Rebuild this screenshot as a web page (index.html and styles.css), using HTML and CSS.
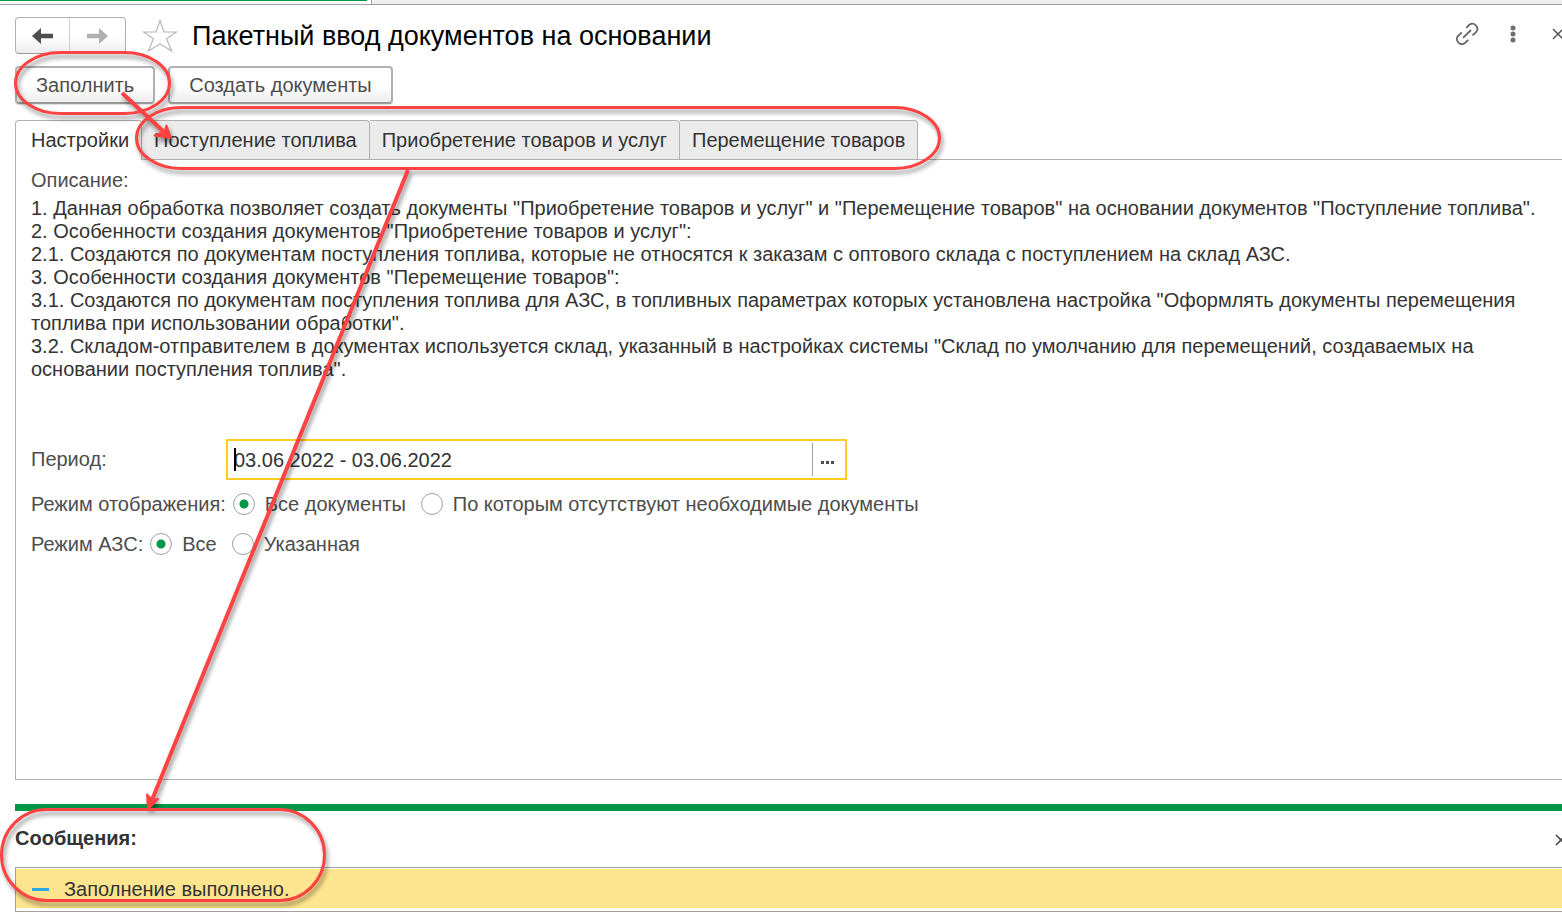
FILE: index.html
```html
<!DOCTYPE html>
<html lang="ru">
<head>
<meta charset="utf-8">
<title>Пакетный ввод документов на основании</title>
<link rel="stylesheet" href="styles.css">
</head>
<body>
<div class="window-tabs"><div class="window-tab-active"></div><div class="window-tab-rest"></div></div>
<div class="page">
  <header class="header">
    <div class="nav">
      <button class="nav-btn" type="button" aria-label="Назад"><svg width="22" height="16" viewBox="0 0 22 16"><path d="M0 8 9 0V5.800H21V10.200H9V16Z" fill="#4d4d4d"/></svg></button>
      <button class="nav-btn" type="button" aria-label="Вперед"><svg width="22" height="16" viewBox="0 0 22 16"><path d="M22 8 13 0V5.800H1V10.200H13V16Z" fill="#b0b0b0"/></svg></button>
    </div>
    <button class="icon-btn star" type="button" aria-label="В избранное"><svg width="36" height="34" viewBox="0 0 36 34"><path d="M18 1.500 22 13H34.500L24.500 20 29.800 32 18 24.800 6.200 32 11.500 20 1.500 13H14Z" fill="#fff" stroke="#adb4bc" stroke-width="1.100"/></svg></button>
    <h1 class="title">Пакетный ввод документов на основании</h1>
    <div class="tools">
      <button class="icon-btn link" type="button" aria-label="Ссылка"><svg width="26" height="26" viewBox="0 0 26 26" fill="none" stroke="#666" stroke-width="1.800"><path d="M12.300 6.800 15.300 3.800A5 5 0 0 1 22.300 10.800L18.500 14.300M7.700 11.300 4 15A5 5 0 0 0 11 22L14.300 18.800M9 16.800 17 9"/></svg></button>
      <button class="icon-btn" type="button" aria-label="Еще"><svg width="6" height="18" viewBox="0 0 6 18" fill="#6e6e6e"><circle cx="3" cy="3" r="2.500"/><circle cx="3" cy="9" r="2.500"/><circle cx="3" cy="15" r="2.500"/></svg></button>
      <button class="icon-btn" type="button" aria-label="Закрыть"><svg width="12" height="12" viewBox="0 0 12 12"><path d="M1 1 11 11M11 1 1 11" stroke="#4d4d4d" stroke-width="1.400"/></svg></button>
    </div>
  </header>
  <div class="commands">
    <button class="command" type="button">Заполнить</button>
    <button class="command" type="button">Создать документы</button>
  </div>
  <div class="tabs" role="tablist">
    <button class="tab tab-active" role="tab" aria-selected="true" type="button">Настройки</button>
    <button class="tab" role="tab" type="button">Поступление топлива</button>
    <button class="tab" role="tab" type="button">Приобретение товаров и услуг</button>
    <button class="tab" role="tab" type="button">Перемещение товаров</button>
  </div>
  <main class="panel">
    <div class="caption">Описание:</div>
    <div class="description">
      <p>1. Данная обработка позволяет создать документы "Приобретение товаров и услуг" и "Перемещение товаров" на основании документов "Поступление топлива".</p>
      <p>2. Особенности создания документов "Приобретение товаров и услуг":</p>
      <p>2.1. Создаются по документам поступления топлива, которые не относятся к заказам с оптового склада с поступлением на склад АЗС.</p>
      <p>3. Особенности создания документов "Перемещение товаров":</p>
      <p>3.1. Создаются по документам поступления топлива для АЗС, в топливных параметрах которых установлена настройка "Оформлять документы перемещения топлива при использовании обработки".</p>
      <p>3.2. Складом-отправителем в документах используется склад, указанный в настройках системы "Склад по умолчанию для перемещений, создаваемых на основании поступления топлива".</p>
    </div>
    <div class="period">
      <label class="period-label" for="period">Период:</label>
      <div class="field">
        <input class="field-input" id="period" type="text" value="03.06.2022 - 03.06.2022">
        <span class="caret"></span>
        <button class="field-btn" type="button" aria-label="Выбрать период"><svg width="13" height="3" viewBox="0 0 13 3" fill="#4d4d4d"><path d="M0 0H3V3H0ZM5 0H8V3H5ZM10 0H13V3H10Z"/></svg></button>
      </div>
    </div>
    <div class="options" role="radiogroup" aria-labelledby="mode">
      <span class="options-label" id="mode">Режим отображения:</span>
      <label class="option"><input class="radio" type="radio" name="mode" checked>Все документы</label>
      <label class="option"><input class="radio" type="radio" name="mode">По которым отсутствуют необходимые документы</label>
    </div>
    <div class="options" role="radiogroup" aria-labelledby="station">
      <span class="options-label" id="station">Режим АЗС:</span>
      <label class="option"><input class="radio" type="radio" name="station" checked>Все</label>
      <label class="option"><input class="radio" type="radio" name="station">Указанная</label>
    </div>
  </main>
  <section class="messages">
    <div class="messages-head">
      <h2 class="messages-title">Сообщения:</h2>
      <button class="icon-btn messages-close" type="button" aria-label="Закрыть сообщения"><svg width="12" height="12" viewBox="0 0 12 12"><path d="M1 1 11 11M11 1 1 11" stroke="#4d4d4d" stroke-width="1.600"/></svg></button>
    </div>
    <div class="messages-list"><div class="message"><span class="dash"></span>Заполнение выполнено.</div></div>
  </section>
</div>
<svg class="marks" width="960" height="912" viewBox="0 0 960 912" fill="none" stroke="#ff4343" stroke-width="3" aria-hidden="true">
  <rect x="15.500" y="52.500" width="154" height="61" rx="45" ry="30.500"/>
  <rect x="136.500" y="107.500" width="803" height="61" rx="45" ry="30.500"/>
  <rect x="1.500" y="809.500" width="323" height="91" rx="45" ry="45.500"/>
  <path d="M122 93 164 132M408 170 152 800" stroke-width="4"/>
  <path d="M171 138 166.500 125.500 164.500 131.500 154.500 135.500ZM148 809 147 794.500 152 799.500 158 799Z" fill="#ff4343" stroke-width="2" stroke-linejoin="round"/>
</svg>
</body>
</html>
```
FILE: styles.css
```css
* { box-sizing: border-box; }
body {
  position: relative;
  display: flex;
  flex-direction: column;
  min-height: 100vh;
  margin: 0;
  overflow: hidden;
  background: #fff;
  color: #333;
  font: 20px/23px "Liberation Sans", Arial, sans-serif;
}
button, input { font: inherit; color: inherit; margin: 0; }
h1, h2, p { margin: 0; }
svg { display: block; }
.window-tabs { display: flex; height: 5px; border-bottom: 1px solid #a0a0a0; }
.window-tab-active { width: 367px; height: 1px; background: #009846; }
.window-tab-rest { flex: 1; margin-left: 4px; border-left: 1px solid #a0a0a0; background: #f0f0f0; }
.page { display: flex; flex: 1; flex-direction: column; padding-left: 15px; }
.header { display: flex; align-items: center; height: 37px; margin-top: 12px; }
.nav { display: flex; width: 111px; height: 37px; border: 1px solid #b0b0b0; border-bottom-color: #999; border-radius: 4px; background: linear-gradient(#fff 50%, #ededed); }
.nav-btn { display: flex; flex: 1 1 0; align-items: center; justify-content: center; padding: 0; border: 0; background: none; }
.nav-btn + .nav-btn { border-left: 1px solid #d0d0d0; padding-right: 2px; }
.icon-btn { flex: none; padding: 0; border: 0; background: none; }
.star { margin: 0 14px 0 16px; }
.title { color: #000; font-size: 27px; font-weight: 400; line-height: 32px; white-space: nowrap; }
.tools { display: flex; align-items: center; gap: 36px; height: 34px; margin: 0 -2px 3px auto; }
.link { margin-right: -6px; }
.commands { display: flex; gap: 13px; margin-top: 12px; }
.command { height: 38px; padding: 0 19px; border: 2px solid #b0b0b0; border-bottom-color: #999; border-radius: 4px; background: linear-gradient(#fff 50%, #ededed); color: #4d4d4d; box-shadow: 0 1px 1px #ddd; white-space: nowrap; }
.tabs { display: flex; height: 40px; margin-top: 16px; border-bottom: 1px solid #b0b0b0; }
.tab { height: 39px; padding: 0 12px; border: 1px solid #b0b0b0; border-width: 1px 1px 0 0; border-radius: 0 4px 0 0; background: #ebebeb; white-space: nowrap; }
.tab-active { height: 40px; padding: 0 12px 0 15px; border-left-width: 1px; border-radius: 4px 4px 0 0; background: #fff; }
.panel { flex: 1; padding: 9px 0 0 15px; border: 1px solid #b0b0b0; border-width: 0 0 1px 1px; color: #4d4d4d; }
.description { margin-top: 5px; color: #333; }
.period { display: flex; align-items: center; margin-top: 58px; }
.period-label { width: 195px; }
.field { position: relative; display: flex; width: 621px; height: 41px; padding: 2px 0; border: 2px solid #ffcc1f; color: #333; }
.field-input { flex: 1; min-width: 0; padding: 1px 6px 0; border: 0; outline: 0; background: none; }
.caret { position: absolute; top: 7px; left: 6px; width: 2px; height: 23px; background: #000; }
.field-btn { display: flex; align-items: center; justify-content: center; width: 33px; padding: 6px 3px 0 0; border: 0; border-left: 1px solid #a0a0a0; background: none; }
.options { display: flex; align-items: center; height: 24px; margin-top: 12px; }
.options + .options { margin-top: 16px; }
.options-label { margin-right: 7px; }
.option { display: flex; align-items: center; gap: 10px; margin-right: 15px; }
.radio { width: 22px; height: 22px; border: 1px solid #a0a0a0; border-radius: 50%; appearance: none; background: #fff; }
.radio:checked { background: radial-gradient(circle, #009846 0 4px, #fff 5px); }
.messages { margin-top: 24px; border-top: 7px solid #009846; }
.messages-head { display: flex; align-items: center; justify-content: space-between; height: 56px; padding-bottom: 2px; }
.messages-title { font-size: 20px; line-height: 23px; }
.messages-close { margin: 4px -5px 0 0; }
.messages-list { padding: 1px 0 3px; border: 1px solid #a0a0a0; border-right: 0; }
.message { display: flex; align-items: center; gap: 15px; height: 39px; padding: 1px 0 0 16px; background: #fde48e; }
.dash { width: 17px; height: 3px; background: #2fa8dc; }
.marks { position: absolute; top: 0; left: 0; filter: drop-shadow(2px 4px 2px rgba(0, 0, 0, 0.4)); pointer-events: none; }
```
